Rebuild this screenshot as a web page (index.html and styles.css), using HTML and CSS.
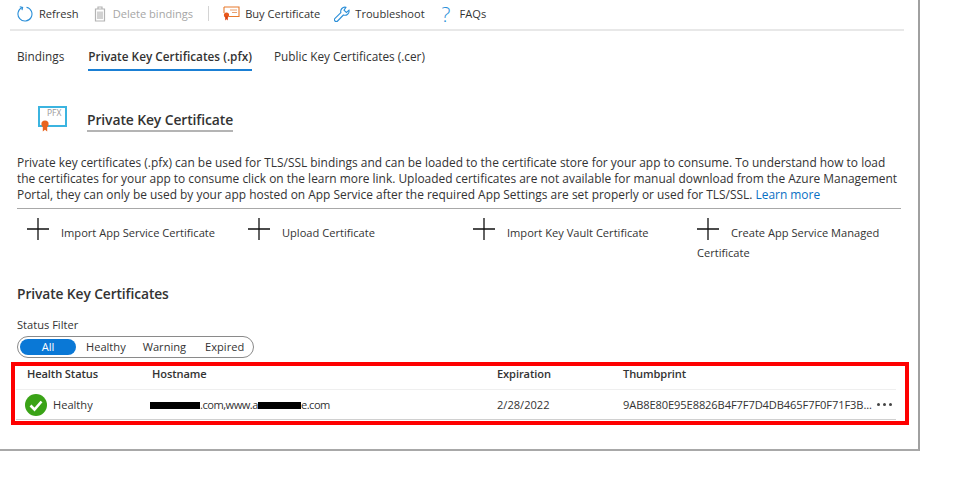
FILE: index.html
```html
<!DOCTYPE html>
<html lang="en">
<head>
<meta charset="utf-8">
<title>Private Key Certificates</title>
<link rel="stylesheet" href="styles.css">
</head>
<body>
<main class="panel">
  <nav class="toolbar">
    <span class="tool"><svg class="ico" width="16" height="16" viewBox="0 0 16 16"><path d="M5.2 1.6 A7 7 0 1 0 9.5 1.2" fill="none" stroke="#2b8fd8" stroke-width="1.1"/><path d="M2.8 0.8 L5.6 1.4 L5 4.2" fill="none" stroke="#2b8fd8" stroke-width="1.1"/></svg>Refresh</span>
    <span class="tool off"><svg class="ico" width="14" height="16" viewBox="0 0 14 16"><path d="M2.5 3 H11.5 V15 H2.5 Z M5 3 V1 H9 V3 M5 5.5 V13 M7 5.5 V13 M9 5.5 V13" fill="none" stroke="#b4b4b4" stroke-width="1.2"/></svg>Delete bindings</span>
    <span class="divider"></span>
    <span class="tool tight"><svg class="ico" width="17" height="15" viewBox="0 0 17 15"><path d="M1 1 H16 V10.5 H6" fill="none" stroke="#e8792b" stroke-width="1.1"/><path d="M1 1 V7" fill="none" stroke="#e8792b" stroke-width="1.1"/><path d="M7 4 H14 M9 6.5 H14" stroke="#e8a070" stroke-width="1"/><circle cx="3.5" cy="9" r="2.6" fill="#e8571a"/><path d="M2.2 10.5 V14.5 L3.5 13.3 L4.8 14.5 V10.5 Z" fill="#d8400f"/></svg>Buy Certificate</span>
    <span class="tool tight"><svg class="ico" width="16" height="16" viewBox="0 0 16 16"><path d="M15 4.2 L12.4 6.4 L10 4.2 L11.9 1.3 A4.2 4.2 0 0 0 6.9 6.6 L1 12.4 A1.8 1.8 0 0 0 3.6 15 L9.4 9 A4.2 4.2 0 0 0 15 4.2 Z" fill="none" stroke="#2b8fd8" stroke-width="1.1"/></svg>Troubleshoot</span>
    <span class="tool"><span class="qmark">?</span>FAQs</span>
  </nav>

  <div class="tabs">
    <span class="tab">Bindings</span>
    <span class="tab active">Private Key Certificates (.pfx)</span>
    <span class="tab">Public Key Certificates (.cer)</span>
  </div>

  <header class="title-row">
    <svg class="pfx" width="30" height="26" viewBox="0 0 30 26"><rect x="1" y="1" width="27" height="19" fill="#fff" stroke="#3bb4e0" stroke-width="2"/><circle cx="7" cy="18" r="3.6" fill="#e8641e"/><path d="M4.8 20 V25.5 L7 23.8 L9.2 25.5 V20 Z" fill="#e8641e"/><text x="9" y="10" class="pfx-text">PFX</text></svg>
    <h1 class="title">Private Key Certificate</h1>
  </header>

  <p class="intro">
    <span class="line">Private key certificates (.pfx) can be used for TLS/SSL bindings and can be loaded to the certificate store for your app to consume. To understand how to load</span>
    <span class="line">the certificates for your app to consume click on the learn more link. Uploaded certificates are not available for manual download from the Azure Management</span>
    <span class="line">Portal, they can only be used by your app hosted on App Service after the required App Settings are set properly or used for TLS/SSL. <a class="link">Learn more</a></span>
  </p>

  <div class="actions">
    <div class="action a1"><svg class="plus" width="22" height="22" viewBox="0 0 22 22"><path d="M0 11 H22 M11 0 V22" stroke="#111" stroke-width="1.3"/></svg>Import App Service Certificate</div>
    <div class="action a2"><svg class="plus" width="22" height="22" viewBox="0 0 22 22"><path d="M0 11 H22 M11 0 V22" stroke="#111" stroke-width="1.3"/></svg>Upload Certificate</div>
    <div class="action a3"><svg class="plus" width="22" height="22" viewBox="0 0 22 22"><path d="M0 11 H22 M11 0 V22" stroke="#111" stroke-width="1.3"/></svg>Import Key Vault Certificate</div>
    <div class="action a4"><svg class="plus" width="22" height="22" viewBox="0 0 22 22"><path d="M0 11 H22 M11 0 V22" stroke="#111" stroke-width="1.3"/></svg>Create App Service Managed Certificate</div>
  </div>

  <h2 class="section">Private Key Certificates</h2>
  <div class="filter-label">Status Filter</div>
  <div class="filter">
    <span class="pill on">All</span>
    <span class="pill p-h">Healthy</span>
    <span class="pill p-w">Warning</span>
    <span class="pill p-e">Expired</span>
  </div>

  <section class="redbox">
    <div class="row head">
      <span class="c1">Health Status</span>
      <span class="c2">Hostname</span>
      <span class="c3">Expiration</span>
      <span class="c4">Thumbprint</span>
    </div>
    <div class="row body">
      <span class="c1 status"><svg width="22" height="22" viewBox="0 0 22 22"><circle cx="11" cy="11" r="11" fill="#3aa317"/><path d="M5.5 11.5 L9.5 15.5 L16.5 7.5" fill="none" stroke="#fff" stroke-width="2.6"/></svg>Healthy</span>
      <span class="c2 host"><span class="redact r1"></span>.com,www.a<span class="redact r2"></span>e.com</span>
      <span class="c3">2/28/2022</span>
      <span class="c4 print">9AB8E80E95E8826B4F7F7D4DB465F7F0F71F3B...</span>
      <span class="dots"><i></i><i></i><i></i></span>
    </div>
  </section>
</main>
</body>
</html>
```

FILE: styles.css
```css
html, body {
  margin: 0;
  padding: 0;
  background: #fff;
}
body {
  width: 974px;
  height: 502px;
  overflow: hidden;
  font-family: "Open Sans", "Noto Sans", sans-serif;
  font-size: 11.1px;
  color: #333;
}
.panel {
  box-sizing: border-box;
  width: 920px;
  height: 451px;
  border-right: 2px solid #a0a0a0;
  border-bottom: 2px solid #a8a8a8;
  padding-left: 17px;
  display: flex;
  flex-direction: column;
}
.toolbar {
  box-sizing: border-box;
  margin-left: -7px;
  width: 894px;
  height: 31px;
  border-bottom: 2px solid #e8e8e8;
  display: flex;
  align-items: center;
  padding: 0 0 2px 7px;
}
.tool {
  display: inline-flex;
  align-items: center;
  margin-right: 14px;
  white-space: nowrap;
}
.ico { margin-right: 6px; flex: none; }
.tool.off { color: #a6a6a6; }
.tool.tight .ico { margin-right: 5px; }
.divider {
  width: 1px;
  height: 15px;
  background: #d4d4d4;
  margin: 0 14px 0 1px;
}
.qmark {
  color: #2b8fd8;
  font-size: 21px;
  line-height: 16px;
  width: 12px;
  margin-right: 6px;
  margin-left: 3px;
  font-weight: 300;
}
.tabs {
  display: flex;
  margin-top: 13px;
  height: 28px;
  font-size: 11.8px;
}
.tab { margin-right: 24px; line-height: 24px; height: 27px; box-sizing: border-box; }
.tab.active {
  font-weight: 600;
  border-bottom: 2px solid #1a7fd4;
  margin-right: 22px;
}
.title-row {
  display: flex;
  align-items: flex-start;
  height: 50px;
  margin-top: 36px;
  padding-left: 21px;
}
.pfx { flex: none; margin-top: -2px; margin-right: 19px; }
.pfx-text { font-size: 8.5px; fill: #999; font-family: "Open Sans", sans-serif; }
.title {
  margin: 0;
  font-size: 13.9px;
  font-weight: 600;
  line-height: 24px;
  border-bottom: 2px solid #b4b4b4;
  height: 22px;
  letter-spacing: -0.1px;
}
.intro {
  margin: -4px 0 0;
  width: 884px;
  line-height: 16px;
  height: 54px;
  font-size: 11.93px;
  border-bottom: 1px solid #a8a8a8;
  box-sizing: content-box;
}
.line { display: block; white-space: nowrap; }
.link { color: #0a6fc4; }
.actions {
  display: flex;
  align-items: flex-start;
  margin-top: 9px;
  height: 66px;
}
.action { line-height: 20px; }
.plus { vertical-align: -3px; margin-right: 12px; }
.a1 { margin-left: 10px; width: 221px; white-space: nowrap; }
.a2 { width: 225px; white-space: nowrap; }
.a3 { width: 224px; white-space: nowrap; }
.a4 { width: 204px; }
.section {
  margin: 0;
  font-size: 13.8px;
  font-weight: 600;
  line-height: 20px;
  letter-spacing: -0.1px;
}
.filter-label { margin-top: 13px; line-height: 16px; }
.filter {
  box-sizing: border-box;
  margin-top: 3px;
  width: 237px;
  height: 22px;
  border: 1px solid #8a8a8a;
  border-radius: 11px;
  display: flex;
  align-items: center;
  padding-left: 2px;
}
.pill { line-height: 16px; }
.pill.on {
  width: 56px;
  background: #0a78d6;
  border-radius: 8px;
  color: #fff;
  text-align: center;
  margin-right: 10px;
}
.p-h { margin-right: 17px; }
.p-w { margin-right: 19px; }
.redbox {
  box-sizing: border-box;
  margin: 4px 0 0 -6px;
  width: 898px;
  height: 63px;
  border: 4px solid #fe0000;
  padding-left: 1px;
}
.row {
  display: flex;
  width: 880px;
  align-items: center;
  box-sizing: border-box;
}
.head {
  height: 24px;
  padding-bottom: 8px;
  font-weight: 600;
  border-bottom: 1px solid #efefef;
  letter-spacing: -0.1px;
}
.body {
  height: 30px;
  border-bottom: 1px solid #d0d0d0;
}
.c1 { width: 125px; margin-left: 11px; flex: none; }
.c2 { width: 345px; flex: none; white-space: nowrap; }
.c3 { width: 126px; flex: none; }
.c4 { flex: none; white-space: nowrap; }
.print { letter-spacing: -0.1px; }
.host { letter-spacing: -0.5px; }
.status { display: inline-flex; align-items: center; gap: 6px; margin-left: 9px; width: 127px; }
.redact { display: inline-block; height: 7px; background: #000; }
.r1 { width: 50px; margin-left: -2px; }
.r2 { width: 43px; }
.dots { display: flex; gap: 3px; margin-left: 5px; }
.dots i { width: 3px; height: 3px; border-radius: 50%; background: #444; }
```
